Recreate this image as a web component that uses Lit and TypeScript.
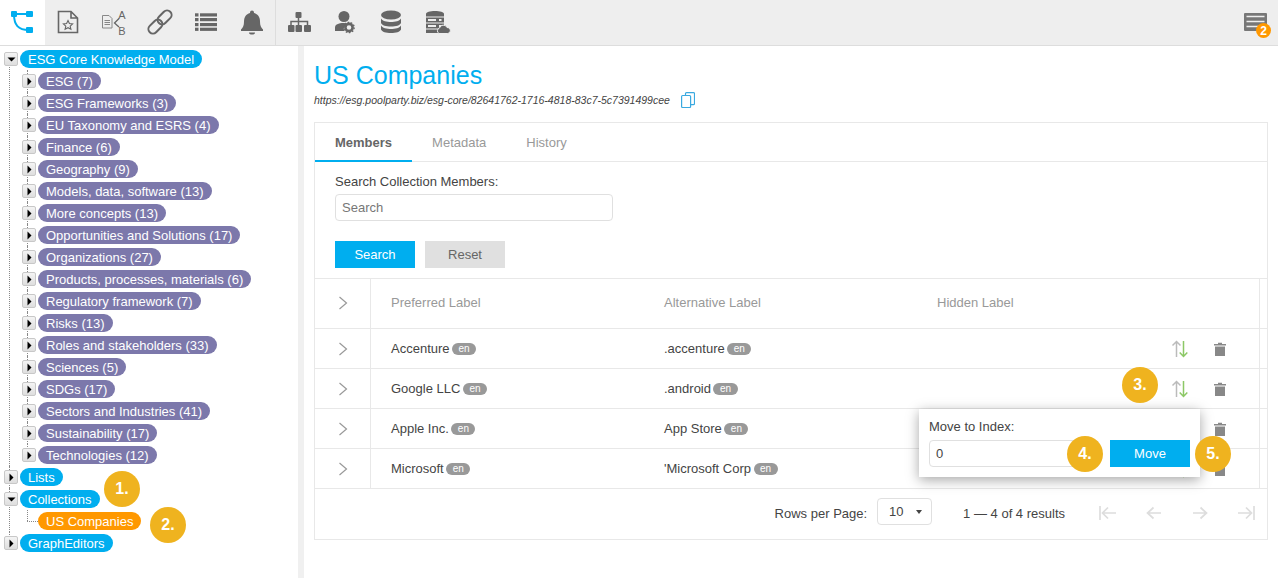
import { LitElement, html, css, svg } from "lit";
import { customElement } from "lit/decorators.js";

const I = "#666";
const box = (c: unknown) => html`<svg class="ti" viewBox="0 0 46 45" width="46" height="45">${c}</svg>`;

const icons = [
  box(svg`<path d="M13.5 11.5H26L32.5 18V32.5H13.5Z M26 11.5V18H32.5" fill="none" stroke="${I}" stroke-width="1.6"/><path d="M23 20.5l1.4 3 3.2.4-2.4 2.2.7 3.2-2.9-1.6-2.9 1.6.7-3.2-2.4-2.2 3.2-.4z" fill="none" stroke="${I}" stroke-width="1.1"/>`),
  box(svg`<path d="M11.5 15.5H18L21 18.5V28H11.5Z" fill="#eee" stroke="#888" stroke-width="1"/><path d="M13.5 20.5H19M13.5 22.5H19M13.5 24.5H19" stroke="#888"/><path d="M28 18.5L23.5 23L28 27" fill="none" stroke="${I}" stroke-width="1.3"/><text x="31" y="19" class="ab">A</text><text x="31" y="35" class="ab">B</text>`),
  box(svg`<g transform="rotate(-45 23 22)" fill="none" stroke="${I}" stroke-width="2"><rect x="8.500" y="17.500" width="16" height="9" rx="4.500"/><rect x="21.500" y="17.500" width="16" height="9" rx="4.500"/></g>`),
  box(svg`<g fill="${I}"><rect x="12" y="13.3" width="3.500" height="3.200"/><rect x="17" y="13.3" width="17" height="3.200"/><rect x="12" y="18" width="3.500" height="3.200"/><rect x="17" y="18" width="17" height="3.200"/><rect x="12" y="23" width="3.500" height="3.200"/><rect x="17" y="23" width="17" height="3.200"/><rect x="12" y="27.700" width="3.500" height="3.200"/><rect x="17" y="27.700" width="17" height="3.200"/></g>`),
  box(svg`<path d="M23 10.5a2 2 0 0 1 2 2v.6c4 1 6 4.2 6 8.4 0 4 1 6 3 8v1.5H12V29.500c2-2 3-4 3-8 0-4.200 2-7.400 6-8.400v-.6a2 2 0 0 1 2-2z M20 32.500h6a3 2 0 0 1-6 0z" fill="${I}"/>`),
  box(svg`<g fill="${I}"><rect x="20.500" y="12" width="6" height="6" rx="1"/><rect x="13" y="25" width="6.500" height="7" rx="1"/><rect x="20.500" y="25" width="6.500" height="7" rx="1"/><rect x="29" y="25" width="7" height="7" rx="1"/></g><path d="M23.500 18V25M16 25V21.500H32.500V25" fill="none" stroke="${I}" stroke-width="1.500"/>`),
  box(svg`<circle cx="23" cy="16.500" r="5.500" fill="${I}"/><path d="M14 31V27.500C14 24.500 17 23 23 23C26 23 27 24 26 25C23 26 22 29 23.500 31Z" fill="${I}"/><circle cx="28" cy="27.500" r="3.600" fill="none" stroke="${I}" stroke-width="2.600"/><circle cx="28" cy="27.500" r="5.200" fill="none" stroke="${I}" stroke-width="1.300" stroke-dasharray="1.700 1.500"/>`),
  box(svg`<g fill="${I}"><ellipse cx="24" cy="15" rx="10" ry="4.500"/><path d="M14 18.500C15 21 20 22 24 22S33 21 34 18.500V23C33 25.500 29 26.500 24 26.500S15 25.500 14 23Z"/><path d="M14 25.500C15 28 20 29 24 29S33 28 34 25.500V29.500C33 32 29 33 24 33S15 32 14 29.500Z"/></g>`),
  box(svg`<path d="M13 14C13 12 17 11 22 11S31 12 31 14V33H13Z" fill="${I}"/><g stroke="#eee" stroke-width="1.200"><path d="M13 17H31M13 23H31M13 29H27"/></g><g fill="#eee"><rect x="15" y="19" width="8" height="2"/><rect x="26" y="19" width="2.500" height="2"/><rect x="15" y="25" width="8" height="2"/><rect x="26" y="25" width="2.500" height="2"/></g><path d="M26 33.500a3 3 0 0 1 .5-5.500a4 4 0 0 1 7.500-.5a3 3 0 0 1 .8 6Z" fill="${I}" stroke="#eee" stroke-width="1"/>`),
];

const tree = [
  "ESG (7)", "ESG Frameworks (3)", "EU Taxonomy and ESRS (4)", "Finance (6)", "Geography (9)",
  "Models, data, software (13)", "More concepts (13)", "Opportunities and Solutions (17)", "Organizations (27)",
  "Products, processes, materials (6)", "Regulatory framework (7)", "Risks (13)", "Roles and stakeholders (33)",
  "Sciences (5)", "SDGs (17)", "Sectors and Industries (41)", "Sustainability (17)", "Technologies (12)",
];

const rows = [
  ["Accenture", ".accenture"],
  ["Google LLC", ".android"],
  ["Apple Inc.", "App Store"],
  ["Microsoft", "'Microsoft Corp"],
];

const chev = html`<svg width="10" height="14" viewBox="0 0 10 14"><path d="M1.500 1L8.500 7L1.500 13" fill="none" stroke="#999" stroke-width="1.200"/></svg>`;

const sortIcon = html`<svg width="18" height="18" viewBox="0 0 18 18" fill="none" stroke-width="1.500"><path d="M5.500 17V1.500M1.500 5.500L5.500 1.500L9.500 5.500" stroke="#bbb"/><path d="M12.500 1V16.500M8.700 12.500L12.500 16.500L16.300 12.500" stroke="#8cc866"/></svg>`;
const trash = html`<svg width="12" height="14" viewBox="0 0 12 14" fill="#888"><path d="M0 2H4V.7H8V2H12V3.400H0Z"/><path d="M1 4.500H11V14H1Z"/></svg>`;

const pg = (d: string) => html`<svg width="20" height="16" viewBox="0 0 20 16"><path d="${d}" fill="none" stroke="#ddd" stroke-width="1.700"/></svg>`;

@customElement("app-root")
export class AppRoot extends LitElement {
  static styles = css`
    :host {
      display: block;
      position: relative;
      width: 1278px;
      height: 578px;
      overflow: hidden;
      background: #fff;
      font-family: "Liberation Sans", Arial, sans-serif;
      font-size: 13px;
      color: #444;
    }
    .toolbar {
      display: flex;
      height: 45px;
      background: #eee;
      border-bottom: 1px solid #ddd;
    }
    .ti { display: block; }
    .tile { width: 46px; height: 45px; }
    .tile.active { width: 45px; background: #fff; }
    .sep { box-shadow: inset 1px 0 #ddd; }
    .ab { font: 11px "Liberation Sans", sans-serif; fill: #666; text-anchor: middle; }
    .spacer { flex: 1; }
    .notes { width: 46px; }
    .body { display: flex; height: 532px; }
    .side {
      flex: none;
      width: 294px;
      border-right: 6px solid #f0f0f0;
      padding: 2px 0 0 4px;
    }
    .node { position: relative; }
    .node::before {
      content: "";
      position: absolute;
      left: 5px;
      top: 0;
      bottom: 0;
      border-left: 1px dotted #888;
    }
    .node.first::before { top: 11px; }
    .node.last::before { bottom: 11px; }
    .row {
      position: relative;
      display: flex;
      align-items: center;
      height: 22px;
    }
    .child { padding-left: 18px; }
    .child::before {
      content: "";
      position: absolute;
      left: 23px;
      top: 0;
      bottom: 0;
      border-left: 1px dotted #888;
    }
    .child.end::before { bottom: 11px; }
    .leaf::after {
      content: "";
      position: absolute;
      left: 23px;
      width: 11px;
      top: 11px;
      border-top: 1px dotted #888;
    }
    .toggle {
      position: relative;
      z-index: 1;
      flex: none;
      box-sizing: border-box;
      width: 14px;
      height: 14px;
      margin-right: 2px;
      border: 1px solid #c8c8c8;
      border-radius: 2px;
      background: linear-gradient(#f4f4f4, #dedede);
      display: flex;
      align-items: center;
      justify-content: center;
    }
    .toggle svg { display: block; }
    .gap { width: 16px; flex: none; }
    .pill {
      position: relative;
      z-index: 1;
      height: 18px;
      line-height: 20px;
      padding: 0 8px;
      border-radius: 9px;
      color: #fff;
      font-size: 13px;
      white-space: nowrap;
    }
    .blue { background: #00aeef; }
    .purple { background: #7c78ab; }
    .orange { background: #ff9800; }
    .main { flex: 1; min-width: 0; padding: 0 10px; }
    h1 {
      margin: 14px 0 0;
      height: 30px;
      line-height: 30px;
      font-size: 25px;
      font-weight: 400;
      color: #00aeef;
    }
    .url {
      display: flex;
      align-items: center;
      height: 18px;
      margin-top: 1px;
      font-size: 10.500px;
      font-style: italic;
      color: #444;
    }
    .url svg { margin-left: 11px; }
    .panel {
      margin-top: 13px;
      height: 418px;
      box-sizing: border-box;
      border: 1px solid #e8e8e8;
    }
    .tabs { display: flex; height: 39px; border-bottom: 1px solid #e8e8e8; box-sizing: border-box; }
    .tab { padding: 0 20px; line-height: 40px; color: #999; margin-bottom: -1px; }
    .tab.on { color: #666; font-weight: 700; border-bottom: 2px solid #00aeef; height: 37px; }
    .search { padding: 0 20px; height: 117px; box-sizing: border-box; border-bottom: 1px solid #e8e8e8; }
    .search label { display: block; height: 32px; line-height: 40px; }
    input {
      box-sizing: border-box;
      height: 27px;
      border: 1px solid #e0e0e0;
      border-radius: 4px;
      padding: 0 6px;
      font: 13px "Liberation Sans", sans-serif;
      color: #444;
      outline: none;
      background: #fff;
    }
    input::placeholder { color: #777; }
    .search input { display: block; width: 278px; }
    .btns { display: flex; gap: 10px; margin-top: 20px; }
    .btn {
      width: 80px;
      height: 27px;
      line-height: 27px;
      text-align: center;
    }
    .btn.pri { background: #00aeef; color: #fff; }
    .btn.sec { background: #e0e0e0; color: #666; }
    .tr {
      display: grid;
      grid-template-columns: 56px 273px 273px 343px;
      height: 40px;
      box-sizing: border-box;
      border-bottom: 1px solid #e8e8e8;
    }
    .tr.head { height: 50px; color: #999; }
    .cell { display: flex; align-items: center; padding-left: 20px; white-space: nowrap; }
    .head .cell { padding-bottom: 2px; }
    .c0 { padding: 0 0 0 23px; border-right: 1px solid #e8e8e8; }
    .c3 { border-right: 1px solid #e8e8e8; justify-content: flex-end; padding: 0 33px 0 0; gap: 25px; }
    .c3 svg { display: block; }
    .c3.hd { justify-content: flex-start; padding-left: 20px; }
    .chip {
      display: inline-block;
      margin-left: 2.500px;
      padding: 0 6.500px;
      height: 12px;
      line-height: 12px;
      border-radius: 6px;
      background: #999;
      color: #fff;
      font-size: 10px;
    }
    .foot {
      display: flex;
      align-items: center;
      justify-content: flex-end;
      height: 48px;
      padding-right: 11px;
    }
    .sel {
      box-sizing: border-box;
      display: flex;
      align-items: center;
      justify-content: space-between;
      width: 55px;
      height: 27px;
      margin: 0 31px 3px 10px;
      padding: 0 9px 0 11px;
      border: 1px solid #e0e0e0;
      border-radius: 4px;
    }
    .caret { width: 0; height: 0; border: 3px solid transparent; border-top: 4px solid #444; border-bottom: 0; }
    .pager { display: flex; gap: 26px; margin-left: 33px; }
    .pager svg { display: block; }
    .pop {
      position: absolute;
      left: 919px;
      top: 409px;
      width: 281px;
      height: 68px;
      box-sizing: border-box;
      padding: 10px;
      background: #fff;
      box-shadow: 0 3px 12px rgba(0, 0, 0, 0.35);
      z-index: 2;
    }
    .pop .lbl { height: 21px; line-height: 15px; }
    .pop .line { display: flex; gap: 11px; }
    .pop input { width: 170px; }
    .num {
      position: absolute;
      z-index: 3;
      width: 36px;
      height: 36px;
      line-height: 36px;
      margin: -18px 0 0 -18px;
      border-radius: 50%;
      background: #efb31f;
      color: #fff;
      font-size: 16px;
      font-weight: 700;
      text-align: center;
    }
  `;

  private tog(open: boolean) {
    return html`<span class="toggle"><svg width="9" height="9" viewBox="0 0 9 9">
      <path d="${open ? "M.5 2.500H8.500L4.500 6.500Z" : "M2.500 .5L6.500 4.500L2.500 8.500Z"}" fill="#000"/></svg></span>`;
  }

  render() {
    return html`
      <div class="toolbar">
        <div class="tile active">
          <svg class="ti" viewBox="0 0 45 45" width="45" height="45">
            <path d="M14 14H29M14 14C14 25 18 30 29 30" fill="none" stroke="#00aeef" stroke-width="2"/>
            <g fill="#00aeef"><rect x="11" y="11" width="6" height="6" rx="1"/><rect x="26" y="11" width="7" height="6" rx="1"/><rect x="26" y="27" width="7" height="6" rx="1"/></g>
          </svg>
        </div>
        ${icons.map((ic, i) => html`<div class="tile ${i === 5 ? "sep" : ""}">${ic}</div>`)}
        <div class="spacer"></div>
        <div class="tile notes">
          <svg class="ti" viewBox="0 0 46 45" width="46" height="45">
            <rect x="12" y="13" width="23" height="18" rx="1" fill="#777"/>
            <path d="M14.500 16.500H32.500M14.500 21.500H32.500M14.500 26.500H28" stroke="#eee" stroke-width="1.300"/>
            <circle cx="31.500" cy="30.500" r="7.500" fill="#ff9800"/>
            <text x="31.500" y="35" text-anchor="middle" fill="#fff" font-size="12" font-weight="700" font-family="Liberation Sans, sans-serif">2</text>
          </svg>
        </div>
      </div>
      <div class="body">
        <div class="side">
          <div class="node first">
            <div class="row">${this.tog(true)}<span class="pill blue">ESG Core Knowledge Model</span></div>
            ${tree.map((t, i) => html`<div class="row child ${i === tree.length - 1 ? "end" : ""}">${this.tog(false)}<span class="pill purple">${t}</span></div>`)}
          </div>
          <div class="node"><div class="row">${this.tog(false)}<span class="pill blue">Lists</span></div></div>
          <div class="node">
            <div class="row">${this.tog(true)}<span class="pill blue">Collections</span></div>
            <div class="row child end leaf"><span class="gap"></span><span class="pill orange">US Companies</span></div>
          </div>
          <div class="node last"><div class="row">${this.tog(false)}<span class="pill blue">GraphEditors</span></div></div>
        </div>
        <div class="main">
          <h1>US Companies</h1>
          <div class="url">
            https://esg.poolparty.biz/esg-core/82641762-1716-4818-83c7-5c7391499cee
            <svg width="14" height="16" viewBox="0 0 14 16" fill="none" stroke="#3aa9e0" stroke-width="1.200"><rect x="4.500" y=".6" width="9" height="12" rx="1"/><rect x=".6" y="3.500" width="9" height="12" rx="1" fill="#fff"/></svg>
          </div>
          <div class="panel">
            <div class="tabs">
              <div class="tab on">Members</div><div class="tab">Metadata</div><div class="tab">History</div>
            </div>
            <div class="search">
              <label>Search Collection Members:</label>
              <input placeholder="Search" />
              <div class="btns"><div class="btn pri">Search</div><div class="btn sec">Reset</div></div>
            </div>
            <div class="tr head">
              <div class="cell c0">${chev}</div>
              <div class="cell">Preferred Label</div>
              <div class="cell">Alternative Label</div>
              <div class="cell c3 hd">Hidden Label</div>
            </div>
            ${rows.map((r) => html`
              <div class="tr">
                <div class="cell c0">${chev}</div>
                <div class="cell">${r[0]}<span class="chip">en</span></div>
                <div class="cell">${r[1]}<span class="chip">en</span></div>
                <div class="cell c3">${sortIcon}${trash}</div>
              </div>`)}
            <div class="foot">
              <span>Rows per Page:</span>
              <div class="sel"><span>10</span><span class="caret"></span></div>
              <span>1 — 4 of 4 results</span>
              <div class="pager">
                ${pg("M2 1V15M18 8H5M10 2.500L4.500 8L10 13.500")}
                ${pg("M17 8H3.500M9.500 2.500L3.500 8L9.500 13.500")}
                ${pg("M3 8H16.500M10.500 2.500L16.500 8L10.500 13.500")}
                ${pg("M18 1V15M2 8H15M10 2.500L15.500 8L10 13.500")}
              </div>
            </div>
          </div>
        </div>
      </div>
      <div class="pop">
        <div class="lbl">Move to Index:</div>
        <div class="line"><input value="0" /><div class="btn pri">Move</div></div>
      </div>
      <div class="num" style="left:122px;top:489px">1.</div>
      <div class="num" style="left:168px;top:525px">2.</div>
      <div class="num" style="left:1140px;top:385px">3.</div>
      <div class="num" style="left:1085px;top:454px">4.</div>
      <div class="num" style="left:1213px;top:454px">5.</div>
    `;
  }
}
